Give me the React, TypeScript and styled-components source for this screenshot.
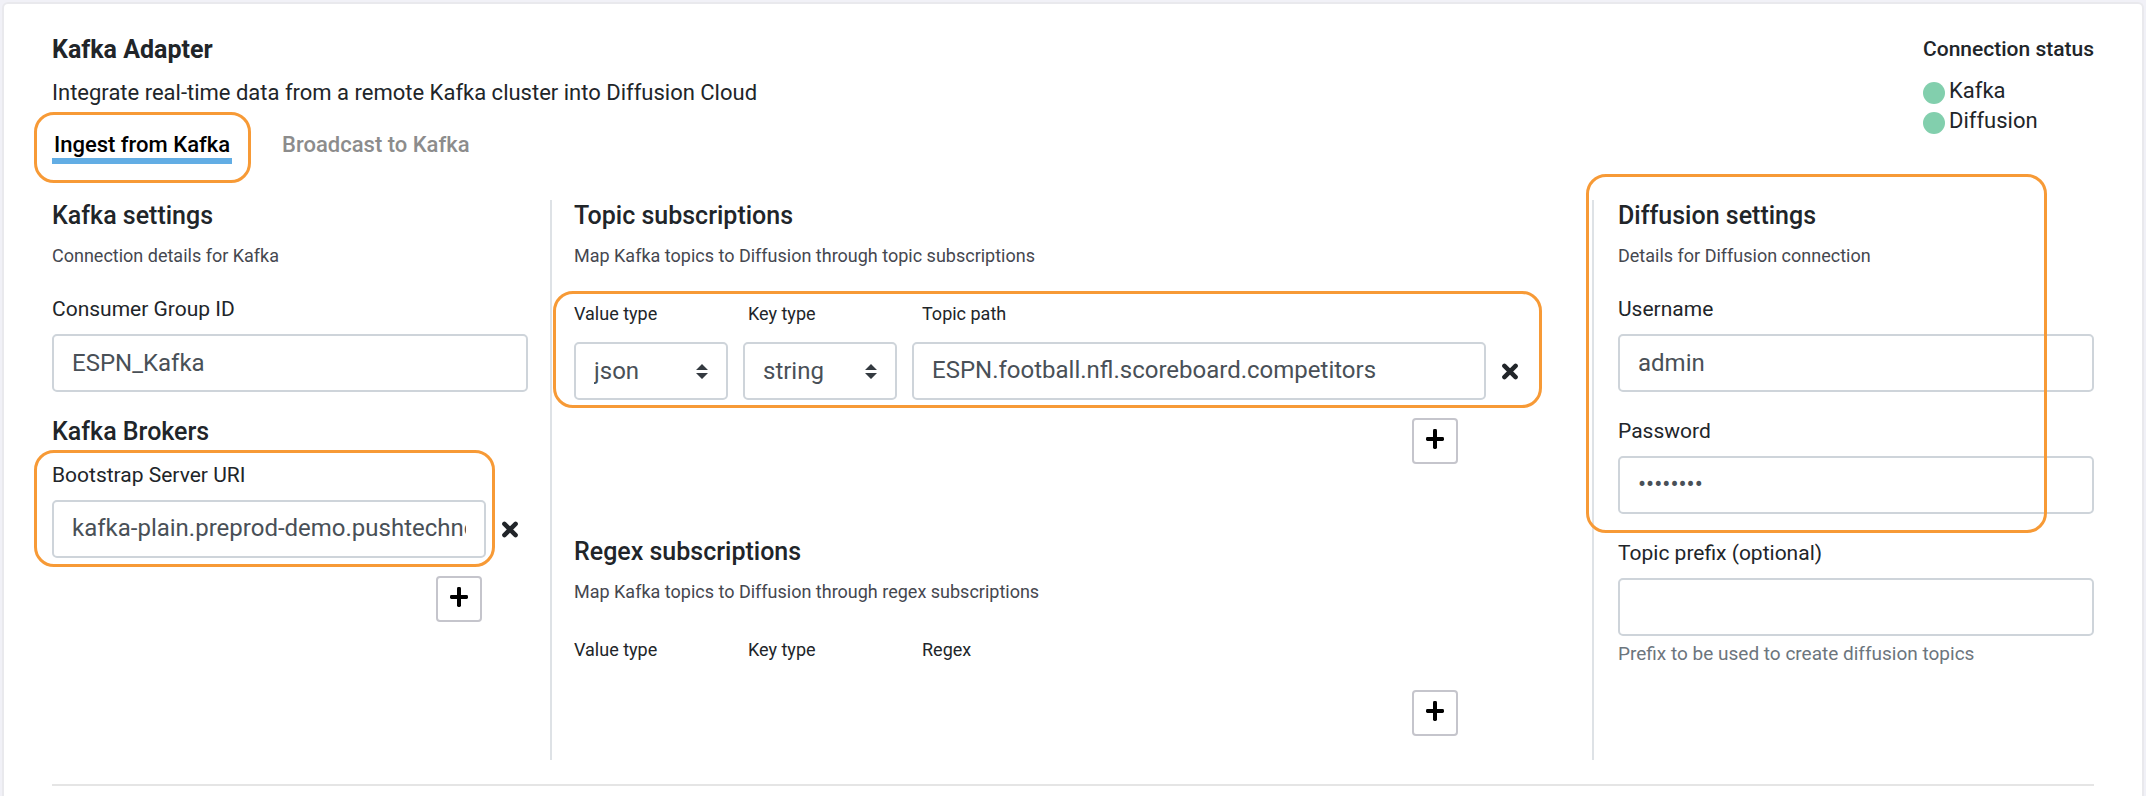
import React from 'react';
import styled, { createGlobalStyle, css } from 'styled-components';

const GlobalStyle = createGlobalStyle`
  *, *::before, *::after { box-sizing: border-box; }
  body {
    margin: 0;
    background: #f1f1f7;
    color: #212529;
    font-family: Roboto, sans-serif;
  }
  h1, h2, h3, p, ul { margin: 0; padding: 0; }
`;

const Page = styled.div`
  display: flex;
  flex-direction: column;
  min-height: 100vh;
  padding: 2px 2px 0;
`;

const Card = styled.main`
  flex: 1;
  padding: 30px 48px 10px;
  background: #fff;
  border: 2px solid #e9e9ed;
  border-bottom: 0;
  border-radius: 6px 6px 0 0;
`;

const Header = styled.header`
  display: flex;
  justify-content: space-between;
  margin-bottom: 36px;
`;

const Title = styled.h1`
  font-size: 25px;
  line-height: 32px;
  font-weight: 700;
`;

const Subtitle = styled.p`
  margin-top: 12px;
  font-size: 22px;
  line-height: 30px;
`;

const Tabs = styled.nav`
  display: flex;
  gap: 48px;
  margin-top: 24px;
`;

const TabItem = styled.div`
  position: relative;
`;

const Tab = styled.button<{ $active?: boolean }>`
  display: block;
  padding: 0 2px;
  border: 0;
  border-bottom: 6px solid ${(p) => (p.$active ? '#62ade4' : 'transparent')};
  background: none;
  color: ${(p) => (p.$active ? '#000' : '#8c8c8c')};
  font: 500 22px/26px Roboto, sans-serif;
  cursor: pointer;
`;

const Highlight = styled.span<{ $inset: string }>`
  position: absolute;
  inset: ${(p) => p.$inset};
  border: 3px solid #f79a36;
  border-radius: 20px;
  pointer-events: none;
`;

const Status = styled.section`
  flex: none;
`;

const StatusTitle = styled.h2`
  font-size: 21px;
  line-height: 30px;
  font-weight: 500;
  margin-bottom: 12px;
`;

const StatusList = styled.ul`
  list-style: none;
`;

const StatusRow = styled.li`
  display: flex;
  align-items: flex-end;
  gap: 4px;
  font-size: 22px;
  line-height: 30px;
`;

const StatusDot = styled.span`
  width: 22px;
  height: 22px;
  margin-bottom: 2px;
  border-radius: 50%;
  background: #82cfad;
`;

const Columns = styled.div`
  display: grid;
  grid-template-columns: minmax(0, 249fr) minmax(0, 522fr) minmax(0, 250fr);
`;

const SideColumn = styled.section<{ $side: 'left' | 'right' }>`
  ${(p) => (p.$side === 'left' ? css`padding-right: 22px;` : css`padding-left: 24px;`)}
`;

const MainColumn = styled.section`
  padding: 0 64px 24px 22px;
  border: solid #dee2e6;
  border-width: 0 2px;
`;

const Block = styled.div`
  & + & { margin-top: 72px; }
`;

const SectionTitle = styled.h2`
  font-size: 25px;
  line-height: 32px;
  font-weight: 500;
`;

const BrokersTitle = styled(SectionTitle)`
  margin: 24px 0 14px;
`;

const SectionText = styled.p`
  margin-top: 12px;
  color: #45474f;
  font-size: 18px;
  line-height: 24px;
`;

const Group = styled.div`
  position: relative;
`;

const Field = styled.div<{ $gap: number }>`
  margin-top: ${(p) => p.$gap}px;
`;

const FieldLabel = styled.label`
  display: block;
  margin-bottom: 12px;
  font-size: 21px;
  line-height: 26px;
`;

const control = css`
  width: 100%;
  min-width: 0;
  height: 58px;
  border: 2px solid #ced4da;
  border-radius: 5px;
  background: #fff;
  color: #495057;
  font: 400 24px/36px Roboto, sans-serif;
`;

const Input = styled.input<{ $raised?: boolean }>`
  ${control}
  display: block;
  padding: ${(p) => (p.$raised ? '0 18px 2px' : '0 18px')};
`;

const SelectBox = styled.div`
  position: relative;
  flex: none;
  width: 154px;

  svg {
    position: absolute;
    right: 20px;
    top: 22px;
    pointer-events: none;
  }
`;

const Select = styled.select`
  ${control}
  display: block;
  padding: 0 36px 0 18px;
  appearance: none;
`;

const HelpText = styled.p`
  margin-top: 6px;
  color: #6c757d;
  font-size: 19px;
  line-height: 24px;
`;

const InputRow = styled.div`
  display: flex;
  align-items: center;
  gap: 6px;
`;

const TopicFields = styled.div`
  display: flex;
  flex: 1;
  gap: 15px;
  min-width: 0;
`;

const RowHeads = styled.div`
  display: grid;
  grid-template-columns: 174px 174px 1fr;
  font-size: 18px;
  line-height: 24px;
`;

const Mapping = styled.div`
  position: relative;
  margin-top: 34px;

  ${InputRow} { margin-top: 16px; }
`;

const RemoveButton = styled.button`
  display: flex;
  flex: none;
  align-items: center;
  justify-content: center;
  width: 36px;
  height: 36px;
  padding: 0;
  border: 0;
  background: none;
  color: #212529;
  cursor: pointer;
`;

const AddRow = styled.div<{ $top: number; $right: number }>`
  display: flex;
  justify-content: flex-end;
  padding: ${(p) => `${p.$top}px ${p.$right}px 0 0`};
`;

const AddButton = styled.button`
  display: flex;
  align-items: center;
  justify-content: center;
  width: 46px;
  height: 46px;
  padding: 0 0 4px;
  border: 2px solid #c5c5cc;
  border-radius: 4px;
  background: #fff;
  color: #000;
  cursor: pointer;
`;

const Divider = styled.hr`
  height: 2px;
  margin: 24px 0 0;
  border: 0;
  background: #e5e5e5;
`;

const Cross = () => (
  <svg width="16" height="17" viewBox="0 0 16 17" aria-hidden="true">
    <path d="M2.4 2.9 13.6 14.1M13.6 2.9 2.4 14.1" stroke="currentColor" strokeWidth="4.5" strokeLinecap="round" />
  </svg>
);

const Plus = () => (
  <svg width="18" height="20" viewBox="0 0 18 20" aria-hidden="true">
    <rect x="0" y="8" width="18" height="4" rx="1.4" fill="currentColor" />
    <rect x="7" y="0" width="4" height="20" rx="1.4" fill="currentColor" />
  </svg>
);

const Carets = () => (
  <svg width="12" height="15" viewBox="0 0 12 15" aria-hidden="true">
    <path d="M6 0 0 6h12zM6 15 0 9h12z" fill="#343a40" />
  </svg>
);

function TypeSelect({ id, value, options }: { id: string; value: string; options: string[] }) {
  return (
    <SelectBox>
      <Select id={id} defaultValue={value}>
        {options.map((o) => <option key={o}>{o}</option>)}
      </Select>
      <Carets />
    </SelectBox>
  );
}

function Add({ label, top, right }: { label: string; top: number; right: number }) {
  return (
    <AddRow $top={top} $right={right}>
      <AddButton type="button" aria-label={label}><Plus /></AddButton>
    </AddRow>
  );
}

export default function App() {
  return (
    <>
      <GlobalStyle />
      <Page>
        <Card>
          <Header>
            <div>
              <Title>Kafka Adapter</Title>
              <Subtitle>Integrate real-time data from a remote Kafka cluster into Diffusion Cloud</Subtitle>
              <Tabs>
                <TabItem>
                  <Tab type="button" $active>Ingest from Kafka</Tab>
                  <Highlight $inset="-20px -19px -19px -18px" />
                </TabItem>
                <TabItem>
                  <Tab type="button">Broadcast to Kafka</Tab>
                </TabItem>
              </Tabs>
            </div>
            <Status>
              <StatusTitle>Connection status</StatusTitle>
              <StatusList>
                <StatusRow><StatusDot />Kafka</StatusRow>
                <StatusRow><StatusDot />Diffusion</StatusRow>
              </StatusList>
            </Status>
          </Header>

          <Columns>
            <SideColumn $side="left">
              <SectionTitle>Kafka settings</SectionTitle>
              <SectionText>Connection details for Kafka</SectionText>
              <Field $gap={28}>
                <FieldLabel htmlFor="group-id">Consumer Group ID</FieldLabel>
                <Input id="group-id" defaultValue="ESPN_Kafka" />
              </Field>
              <BrokersTitle>Kafka Brokers</BrokersTitle>
              <Group>
                <FieldLabel htmlFor="bootstrap">Bootstrap Server URI</FieldLabel>
                <InputRow>
                  <Input id="bootstrap" $raised defaultValue="kafka-plain.preprod-demo.pushtechnology.com" />
                  <RemoveButton type="button" aria-label="Remove broker"><Cross /></RemoveButton>
                </InputRow>
                <Highlight $inset="-12px 33px -9px -18px" />
              </Group>
              <Add label="Add broker" top={18} right={46} />
            </SideColumn>

            <MainColumn>
              <Block>
                <SectionTitle>Topic subscriptions</SectionTitle>
                <SectionText>Map Kafka topics to Diffusion through topic subscriptions</SectionText>
                <Mapping>
                  <RowHeads>
                    <label htmlFor="value-type">Value type</label>
                    <label htmlFor="key-type">Key type</label>
                    <label htmlFor="topic-path">Topic path</label>
                  </RowHeads>
                  <InputRow>
                    <TopicFields>
                      <TypeSelect id="value-type" value="json" options={['json', 'string']} />
                      <TypeSelect id="key-type" value="string" options={['string', 'json']} />
                      <Input id="topic-path" $raised defaultValue="ESPN.football.nfl.scoreboard.competitors" />
                    </TopicFields>
                    <RemoveButton type="button" aria-label="Remove topic"><Cross /></RemoveButton>
                  </InputRow>
                  <Highlight $inset="-11px -14px -8px -21px" />
                </Mapping>
                <Add label="Add topic" top={18} right={70} />
              </Block>
              <Block>
                <SectionTitle>Regex subscriptions</SectionTitle>
                <SectionText>Map Kafka topics to Diffusion through regex subscriptions</SectionText>
                <Mapping>
                  <RowHeads>
                    <span>Value type</span>
                    <span>Key type</span>
                    <span>Regex</span>
                  </RowHeads>
                </Mapping>
                <Add label="Add regex" top={28} right={70} />
              </Block>
            </MainColumn>

            <SideColumn $side="right">
              <Group>
                <SectionTitle>Diffusion settings</SectionTitle>
                <SectionText>Details for Diffusion connection</SectionText>
                <Field $gap={28}>
                  <FieldLabel htmlFor="username">Username</FieldLabel>
                  <Input id="username" defaultValue="admin" />
                </Field>
                <Field $gap={26}>
                  <FieldLabel htmlFor="password">Password</FieldLabel>
                  <Input id="password" type="password" $raised defaultValue="password" />
                </Field>
                <Highlight $inset="-26px 47px -19px -32px" />
              </Group>
              <Field $gap={26}>
                <FieldLabel htmlFor="prefix">Topic prefix (optional)</FieldLabel>
                <Input id="prefix" aria-describedby="prefix-help" />
                <HelpText id="prefix-help">Prefix to be used to create diffusion topics</HelpText>
              </Field>
            </SideColumn>
          </Columns>
          <Divider />
        </Card>
      </Page>
    </>
  );
}
